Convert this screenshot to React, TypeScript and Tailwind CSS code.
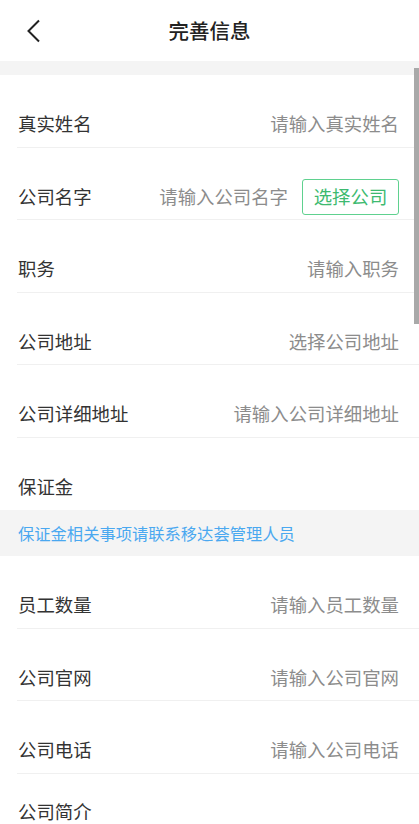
import React from 'react';

type Field = { label: string; placeholder?: string; pick?: boolean };

const top: Field[] = [
  { label: '真实姓名', placeholder: '请输入真实姓名' },
  { label: '公司名字', placeholder: '请输入公司名字', pick: true },
  { label: '职务', placeholder: '请输入职务' },
  { label: '公司地址', placeholder: '选择公司地址' },
  { label: '公司详细地址', placeholder: '请输入公司详细地址' },
];

const bottom: Field[] = [
  { label: '员工数量', placeholder: '请输入员工数量' },
  { label: '公司官网', placeholder: '请输入公司官网' },
  { label: '公司电话', placeholder: '请输入公司电话' },
];

function Row({ field, last }: { field: Field; last?: boolean }) {
  return (
    <div className={`ml-[17px] pl-px pr-[20px] pt-[31px] h-[72.5px] ${last ? '' : 'border-b border-[#f0f0f0]'}`}>
      <div className="h-9 flex items-center justify-between">
        <span className="text-[18.4px] text-[#333]">{field.label}</span>
        <div className="flex items-center">
          {field.placeholder && <span className="text-[18.4px] text-[#8c8c8c]">{field.placeholder}</span>}
          {field.pick && (
            <button className="ml-[14px] h-9 w-[97px] rounded-[3px] border border-[#5fd18f] text-[18.4px] text-[#3dba70]">
              选择公司
            </button>
          )}
        </div>
      </div>
    </div>
  );
}

export default function App() {
  return (
    <div className="relative h-[824px] w-[419px] overflow-hidden bg-white font-['Noto_Sans_CJK_SC',sans-serif]">
      {/* Header */}
      <div className="relative h-[61px] flex items-center justify-center">
        <svg className="absolute left-[26px] top-[19px]" width="15" height="24" viewBox="0 0 15 24" fill="none">
          <path d="M13 1.5 L2.5 12 L13 22.5" stroke="#222" strokeWidth="2" />
        </svg>
        <h1 className="text-[20.5px] font-medium text-[#222]">完善信息</h1>
      </div>
      <div className="h-[14px] bg-[#f4f4f4]" />

      {top.map((f) => (
        <Row key={f.label} field={f} />
      ))}
      <Row field={{ label: '保证金' }} last />

      <div className="h-[46px] bg-[#f4f4f4] px-[18px] flex items-center">
        <span className="text-[16.3px] text-[#4aa8f0]">保证金相关事项请联系移达荟管理人员</span>
      </div>

      {bottom.map((f) => (
        <Row key={f.label} field={f} />
      ))}
      <div className="ml-[18px] pt-[25px] text-[18.4px] leading-6 text-[#333]">公司简介</div>

      {/* scrollbar */}
      <div className="absolute right-0 top-[68px] h-[256px] w-[5px] bg-[#a9a9a9]" />
    </div>
  );
}
